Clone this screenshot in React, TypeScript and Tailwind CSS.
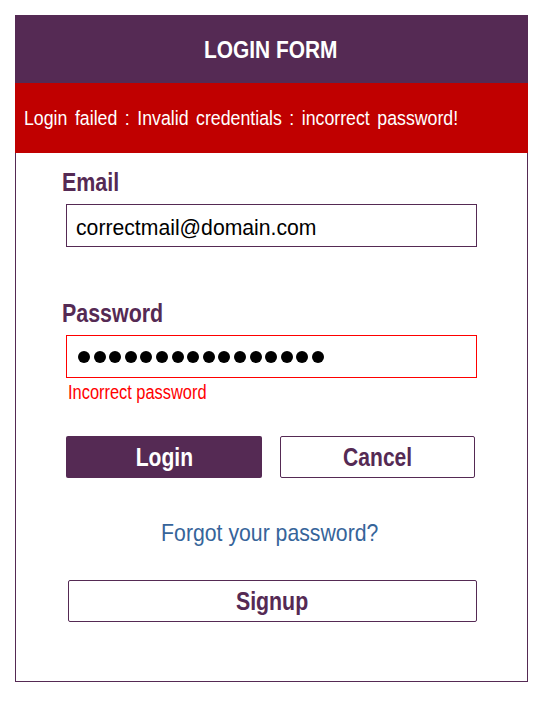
import React from "react";

export default function App() {
  const dots = Array.from({ length: 16 });
  return (
    <div className="min-h-[702px] w-[548px] bg-white pt-[15px] pl-[15px] font-['Liberation_Sans',Arial,sans-serif]">
      <div className="w-[513px] h-[667px] flex flex-col">
        <div className="h-[68px] bg-[#552a54] text-white flex items-center justify-center pt-[1px] pr-[1px] font-bold text-[24px]">
          <span className="inline-block scale-x-[0.87]">LOGIN FORM</span>
        </div>
        <div className="h-[70px] bg-[#c00000] text-white flex items-center pl-[9px] text-[20.5px] whitespace-nowrap">
          <span className="inline-block origin-left scale-x-[0.865] [word-spacing:3px]">
            Login failed : Invalid credentials : incorrect password!
          </span>
        </div>
        <div className="flex-1 border-l border-r border-b border-[#552a54] flex flex-col">
          <div className="mt-[14px] ml-[46px] h-[30px] leading-[30px] text-[25.5px] font-bold text-[#552a54]">
            <span className="inline-block origin-left scale-x-[0.84]">Email</span>
          </div>
          <div className="mt-[7px] ml-[50px] w-[411px] h-[43px] border border-[#552a54] pl-[9px] pt-[11px] text-[21.2px] leading-[24px] text-black">
            correctmail@domain.com
          </div>
          <div className="mt-[51px] ml-[46px] h-[30px] leading-[30px] text-[25.5px] font-bold text-[#552a54]">
            <span className="inline-block origin-left scale-x-[0.84]">Password</span>
          </div>
          <div className="mt-[7px] ml-[50px] w-[411px] h-[43px] border border-[#ff0000] pl-[11px] flex items-center gap-[3.6px]">
            {dots.map((_, i) => (
              <span key={i} className="block w-[12px] h-[12px] rounded-full bg-black" />
            ))}
          </div>
          <div className="mt-[4px] ml-[52px] h-[20px] leading-[20px] text-[20px] text-[#ff0000]">
            <span className="inline-block origin-left scale-x-[0.82]">Incorrect password</span>
          </div>
          <div className="mt-[34px] ml-[50px] flex gap-[18px]">
            <button className="w-[196px] h-[42px] rounded-[2px] bg-[#552a54] text-white font-bold text-[26px] flex items-center justify-center">
              <span className="inline-block scale-x-[0.81]">Login</span>
            </button>
            <button className="w-[195px] h-[42px] rounded-[2px] border border-[#552a54] bg-white text-[#552a54] font-bold text-[26px] flex items-center justify-center">
              <span className="inline-block scale-x-[0.81]">Cancel</span>
            </button>
          </div>
          <div className="mt-[41px] h-[28px] leading-[28px] text-[24px] text-[#36649a] flex justify-center pr-[3px]">
            <span className="inline-block scale-x-[0.885]">Forgot your password?</span>
          </div>
          <button className="mt-[33px] ml-[52px] w-[409px] h-[42px] rounded-[2px] border border-[#552a54] bg-white text-[#552a54] font-bold text-[26px] flex items-center justify-center">
            <span className="inline-block scale-x-[0.82]">Signup</span>
          </button>
        </div>
      </div>
    </div>
  );
}
